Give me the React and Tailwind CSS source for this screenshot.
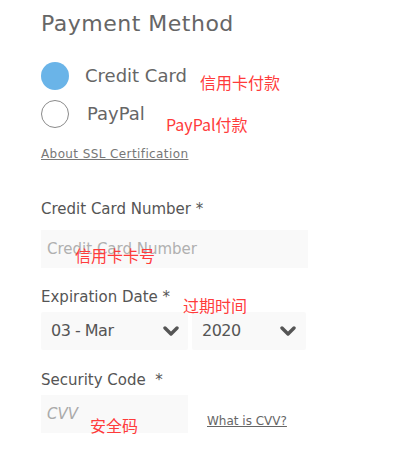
import React from 'react';

function Chevron() {
  return (
    <svg width="16" height="10" viewBox="0 0 16 10" className="shrink-0">
      <path d="M2 2 L8 8 L14 2" fill="none" stroke="#555" strokeWidth="3.4" strokeLinecap="round" strokeLinejoin="round" />
    </svg>
  );
}

function Note({ className, children }) {
  return (
    <span className={`absolute whitespace-nowrap text-[16px] leading-none text-[#ff3b3b] ${className}`} style={{ fontFamily: '"Noto Sans CJK SC", "Noto Sans", sans-serif' }}>
      {children}
    </span>
  );
}

export default function App() {
  const font = { fontFamily: '"DejaVu Sans", "Noto Sans CJK SC", sans-serif' };
  return (
    <div className="relative w-[417px] h-[451px] bg-white text-[#666] pl-[41px]" style={font}>
      <h1 className="pt-[11px] text-[22px] leading-[26px] font-normal tracking-[0.5px] text-[#666]">Payment Method</h1>

      <div className="mt-[25px] flex flex-col gap-[10px]">
        <label className="flex items-center">
          <span className="w-[28px] h-[28px] rounded-full bg-[#6ab4e8] shrink-0" />
          <span className="ml-[16px] text-[18px] leading-[28px] text-[#666]">Credit Card</span>
        </label>
        <label className="flex items-center">
          <span className="w-[28px] h-[28px] rounded-full border border-[#8a8a8a] shrink-0" />
          <span className="ml-[18px] text-[18px] leading-[28px] text-[#666]">PayPal</span>
        </label>
      </div>

      <a className="block mt-[18px] text-[12px] leading-[16px] tracking-[0.4px] underline text-[#777] w-fit">About SSL Certification</a>

      <div className="mt-[38px] text-[15px] leading-[18px] text-[#555]">Credit Card Number *</div>
      <div className="mt-[12px] w-[267px] h-[38px] bg-[#f9f9f9] flex items-center pl-[6px] text-[15px] text-[#b0b0b0]">
        Credit Card Number
      </div>

      <div className="mt-[20px] text-[15px] leading-[18px] text-[#555]">Expiration Date *</div>
      <div className="mt-[6px] flex gap-[4px]">
        <div className="w-[147px] h-[38px] bg-[#f9f9f9] rounded-[2px] flex items-center justify-between pl-[10px] pr-[9px] text-[16px] tracking-[-0.5px] text-[#555]">
          <span>03 - Mar</span>
          <Chevron />
        </div>
        <div className="w-[114px] h-[38px] bg-[#f9f9f9] rounded-[2px] flex items-center justify-between pl-[10px] pr-[10px] text-[16px] tracking-[-0.5px] text-[#555]">
          <span>2020</span>
          <Chevron />
        </div>
      </div>

      <div className="mt-[21px] text-[15px] leading-[18px] text-[#555]">Security Code&nbsp; *</div>
      <div className="mt-[6px] flex items-center">
        <div className="w-[147px] h-[38px] bg-[#f9f9f9] flex items-center pl-[6px] text-[15px] italic text-[#aaa]">CVV</div>
        <a className="ml-[19px] mt-[14px] text-[12px] leading-[16px] underline text-[#666]">What is CVV?</a>
      </div>

      <Note className="left-[200px] top-[74px]">信用卡付款</Note>
      <Note className="left-[166px] top-[116px]">PayPal付款</Note>
      <Note className="left-[75px] top-[247px]">信用卡卡号</Note>
      <Note className="left-[183px] top-[297px]">过期时间</Note>
      <Note className="left-[90px] top-[417px]">安全码</Note>
    </div>
  );
}
